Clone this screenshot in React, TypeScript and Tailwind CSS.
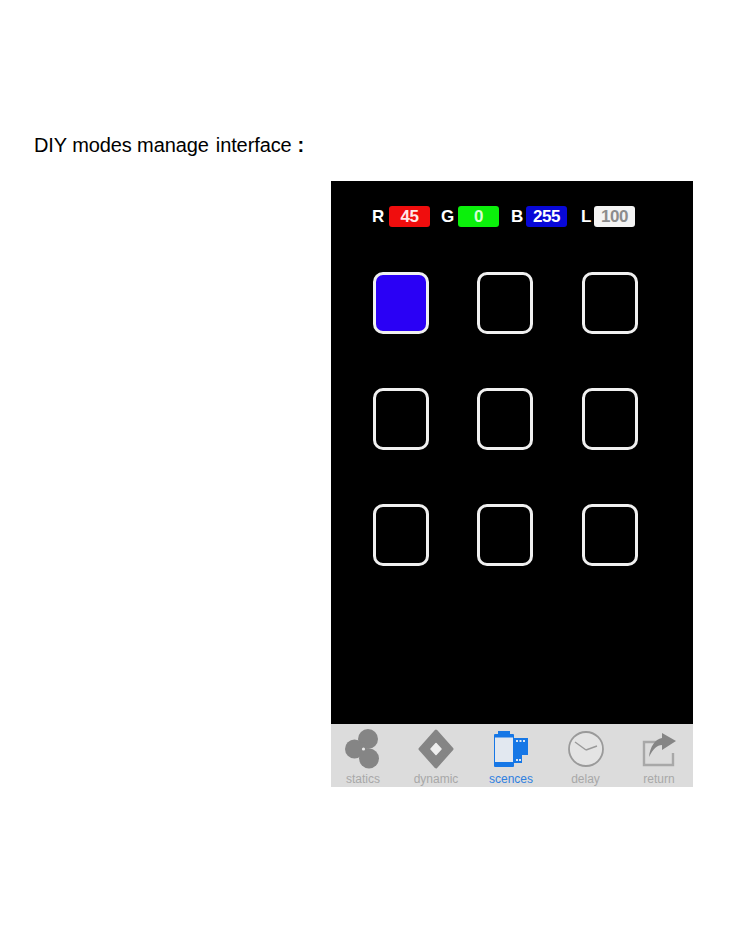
const F = "font-['Liberation_Sans',Arial,sans-serif]";

function Stat({ label, value, bg, fg, labelW, gap }: { label: string; value: string; bg: string; fg: string; labelW: string; gap: string }) {
  return (
    <div className={`flex items-center ${gap}`}>
      <span className={`${labelW} text-[17px] font-bold text-white leading-none`}>{label}</span>
      <span className={`${bg} ${fg} w-[41px] h-[21px] rounded-[3px] flex items-center justify-center text-[17px] tracking-[-0.5px] font-bold leading-none`}>{value}</span>
    </div>
  );
}

function Slot({ filled }: { filled?: boolean }) {
  return <div className={`w-[56px] h-[62px] rounded-[10px] border-[3px] border-[#f0f0f0] ${filled ? "bg-[#2a00f5]" : "bg-black"}`} />;
}

function Statics() {
  return (
    <svg width="36" height="40" viewBox="0 0 36 40" fill="#858585" className="blur-[0.4px]">
      <circle cx="23" cy="10" r="10" />
      <circle cx="9.5" cy="20" r="9.5" />
      <circle cx="24" cy="29.5" r="10" />
      <path d="M12 13 L20 14 L22 20 L20 25 L12 27 Z" />
      <circle cx="18.5" cy="20" r="1.6" fill="#e8e8e8" />
    </svg>
  );
}
function Dynamic() {
  return (
    <svg width="36" height="40" viewBox="0 0 36 40" className="blur-[0.4px]">
      <path fill="#858585" stroke="#858585" strokeWidth="3" strokeLinejoin="round" d="M18 2 L34 20 L18 38 L2 20 Z" />
      <path fill="#eeeeee" stroke="#eeeeee" strokeWidth="1.5" strokeLinejoin="round" d="M18 14.5 L13 20 L18 25.5 L23 20 Z" />
    </svg>
  );
}
function Scences() {
  return (
    <svg width="36" height="40" viewBox="0 0 36 40" className="blur-[0.3px]">
      <rect x="5" y="2" width="12" height="4" fill="#1677e6" />
      <rect x="1" y="5" width="20" height="4" rx="1" fill="#1677e6" />
      <rect x="1.5" y="8" width="19" height="26" fill="#e2e8f0" stroke="#1677e6" strokeWidth="1" />
      <rect x="1" y="33" width="20" height="5" rx="1" fill="#1677e6" />
      <path fill="#1677e6" d="M20 9 H35 V26 H29 V34 H20 Z" />
      <rect x="23" y="11" width="2" height="2" fill="#d9e6f5" />
      <rect x="26.5" y="11" width="2" height="2" fill="#d9e6f5" />
      <rect x="30" y="11" width="2" height="2" fill="#d9e6f5" />
      <rect x="23" y="30" width="2" height="2" fill="#d9e6f5" />
      <rect x="26" y="30" width="2" height="2" fill="#d9e6f5" />
    </svg>
  );
}
function Delay() {
  return (
    <svg width="36" height="40" viewBox="0 0 36 40" fill="none" stroke="#9a9a9a" className="blur-[0.3px]">
      <circle cx="18" cy="20" r="17" strokeWidth="1.8" fill="#e4e4e4" />
      <path d="M18 21 L7 13 M18 21 L29 17" strokeWidth="1.4" />
    </svg>
  );
}
function ReturnIcon() {
  return (
    <svg width="36" height="40" viewBox="0 0 36 40" fill="none" className="blur-[0.4px]">
      <path d="M20 13 H3 V36 H32 V24" stroke="#a8a8a8" strokeWidth="2.4" />
      <path fill="#858585" d="M21 4 L35 12 L21 21 V16 C16 16 12 20 8 28 C9 18 14 10 21 9 Z" />
    </svg>
  );
}

function Tab({ label, active, width, children }: { label: string; active?: boolean; width: string; children: React.ReactNode }) {
  return (
    <div className={`${width} flex flex-col items-center`}>
      <div className="h-[41px] flex items-center justify-center">{children}</div>
      <span className={`mt-[3px] text-[12px] leading-[14px] ${active ? "text-[#2f80e0]" : "text-[#a8a8a8]"}`}>{label}</span>
    </div>
  );
}

export default function App() {
  return (
    <div className={`${F} w-[750px] h-[930px] bg-white pt-[134px] overflow-hidden`}>
      <p className="ml-[34px] h-[47px] flex text-[20px] leading-[23px] tracking-[-0.1px] text-black">
        <span>DIY modes manage</span>
        <span className="ml-[7px]">interface</span>
        <span className="ml-[6px] font-bold">:</span>
      </p>
      <div className="ml-[331px] w-[362px] h-[606px] bg-black flex flex-col">
        <div className="flex pt-[25px] pl-[41px]">
          <Stat label="R" value="45" bg="bg-[#f00d0d]" fg="text-[#ffe8e8]" labelW="w-[12px]" gap="gap-[5px]" />
          <div className="ml-[11px]"><Stat label="G" value="0" bg="bg-[#0bf00b]" fg="text-[#d8ffd8]" labelW="w-[14px]" gap="gap-[3px]" /></div>
          <div className="ml-[12px]"><Stat label="B" value="255" bg="bg-[#0808d8]" fg="text-white" labelW="w-[12px]" gap="gap-[3px]" /></div>
          <div className="ml-[14px]"><Stat label="L" value="100" bg="bg-[#f4f4f4]" fg="text-[#8c8c8c]" labelW="w-[10px]" gap="gap-[3px]" /></div>
        </div>
        <div className="mt-[45px] ml-[41.75px] grid grid-cols-[56px_56px_56px] gap-x-[48.5px] gap-y-[54px]">
          <Slot filled />
          <Slot /><Slot /><Slot /><Slot /><Slot /><Slot /><Slot /><Slot />
        </div>
        <div className="mt-auto h-[63px] bg-[#dcdcdc] flex pt-[4px] pl-[2px]">
          <Tab label="statics" width="w-[60px]"><Statics /></Tab>
          <Tab label="dynamic" width="w-[86px]"><Dynamic /></Tab>
          <Tab label="scences" active width="w-[64px]"><Scences /></Tab>
          <Tab label="delay" width="w-[85px]"><Delay /></Tab>
          <Tab label="return" width="w-[62px]"><ReturnIcon /></Tab>
        </div>
      </div>
    </div>
  );
}
